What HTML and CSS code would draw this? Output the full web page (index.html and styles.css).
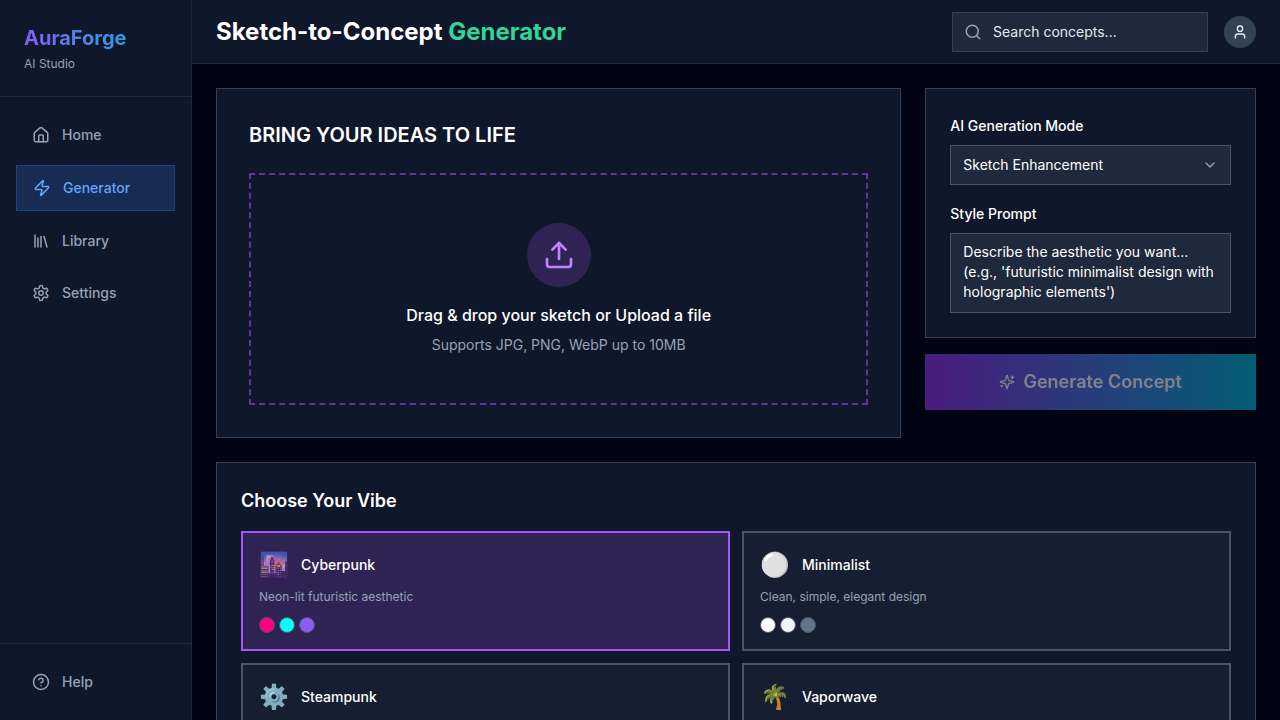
FILE: index.html
```html
<!DOCTYPE html>
<html lang="en">
<head>
    <meta charset="UTF-8">
    <meta name="viewport" content="width=device-width, initial-scale=1.0">
    <title>AuraForge - Sketch-to-Concept Generator</title>
    <link rel="stylesheet" href="styles.css">
</head>
<body>
    <div class="app">
        <aside class="sidebar">
            <div class="brand">
                <div class="brand-name">AuraForge</div>
                <p class="brand-tagline">AI Studio</p>
            </div>

            <nav class="nav">
                <a href="#" class="nav-item">
                    <svg class="icon" width="18" height="18" viewBox="0 0 24 24">
                        <path d="M15 21v-8a1 1 0 0 0-1-1h-4a1 1 0 0 0-1 1v8"/>
                        <path d="M3 10a2 2 0 0 1 .709-1.528l7-5.999a2 2 0 0 1 2.582 0l7 5.999A2 2 0 0 1 21 10v9a2 2 0 0 1-2 2H5a2 2 0 0 1-2-2z"/>
                    </svg>
                    Home
                </a>
                <a href="#" class="nav-item active" aria-current="page">
                    <svg class="icon" width="18" height="18" viewBox="0 0 24 24">
                        <path d="M4 14a1 1 0 0 1-.78-1.63l9.9-10.2a.5.5 0 0 1 .86.46l-1.92 6.02A1 1 0 0 0 13 10h7a1 1 0 0 1 .78 1.63l-9.9 10.2a.5.5 0 0 1-.86-.46l1.92-6.02A1 1 0 0 0 11 14z"/>
                    </svg>
                    Generator
                </a>
                <a href="#" class="nav-item">
                    <svg class="icon" width="18" height="18" viewBox="0 0 24 24">
                        <path d="m16 6 4 14"/>
                        <path d="M12 6v14"/>
                        <path d="M8 8v12"/>
                        <path d="M4 4v16"/>
                    </svg>
                    Library
                </a>
                <a href="#" class="nav-item">
                    <svg class="icon" width="18" height="18" viewBox="0 0 24 24">
                        <path d="M12.22 2h-.44a2 2 0 0 0-2 2v.18a2 2 0 0 1-1 1.73l-.43.25a2 2 0 0 1-2 0l-.15-.08a2 2 0 0 0-2.73.73l-.22.38a2 2 0 0 0 .73 2.73l.15.1a2 2 0 0 1 1 1.72v.51a2 2 0 0 1-1 1.74l-.15.09a2 2 0 0 0-.73 2.73l.22.38a2 2 0 0 0 2.73.73l.15-.08a2 2 0 0 1 2 0l.43.25a2 2 0 0 1 1 1.73V20a2 2 0 0 0 2 2h.44a2 2 0 0 0 2-2v-.18a2 2 0 0 1 1-1.73l.43-.25a2 2 0 0 1 2 0l.15.08a2 2 0 0 0 2.73-.73l.22-.39a2 2 0 0 0-.73-2.73l-.15-.08a2 2 0 0 1-1-1.74v-.5a2 2 0 0 1 1-1.74l.15-.09a2 2 0 0 0 .73-2.73l-.22-.38a2 2 0 0 0-2.73-.73l-.15.08a2 2 0 0 1-2 0l-.43-.25a2 2 0 0 1-1-1.73V4a2 2 0 0 0-2-2z"/>
                        <circle cx="12" cy="12" r="3"/>
                    </svg>
                    Settings
                </a>
            </nav>

            <div class="sidebar-footer">
                <a href="#" class="nav-item">
                    <svg class="icon" width="18" height="18" viewBox="0 0 24 24">
                        <circle cx="12" cy="12" r="10"/>
                        <path d="M9.09 9a3 3 0 0 1 5.83 1c0 2-3 3-3 3"/>
                        <path d="M12 17h.01"/>
                    </svg>
                    Help
                </a>
            </div>
        </aside>

        <div class="content">
            <header class="topbar">
                <h1 class="page-title">Sketch-to-Concept <span class="accent">Generator</span></h1>
                <div class="topbar-actions">
                    <label class="search">
                        <svg class="icon" width="18" height="18" viewBox="0 0 24 24">
                            <circle cx="11" cy="11" r="8"/>
                            <path d="m21 21-4.3-4.3"/>
                        </svg>
                        <input type="search" class="search-input" placeholder="Search concepts..." aria-label="Search concepts">
                    </label>
                    <button type="button" class="avatar" aria-label="Account">
                        <svg class="icon" width="16" height="16" viewBox="0 0 24 24">
                            <path d="M19 21v-2a4 4 0 0 0-4-4H9a4 4 0 0 0-4 4v2"/>
                            <circle cx="12" cy="7" r="4"/>
                        </svg>
                    </button>
                </div>
            </header>

            <main class="main">
                <div class="workspace">
                    <section class="card upload">
                        <h2 class="upload-title">BRING YOUR IDEAS TO LIFE</h2>
                        <button type="button" class="dropzone">
                            <span class="dropzone-icon">
                                <svg class="icon" width="32" height="32" viewBox="0 0 24 24">
                                    <path d="M21 15v4a2 2 0 0 1-2 2H5a2 2 0 0 1-2-2v-4"/>
                                    <path d="m17 8-5-5-5 5"/>
                                    <path d="M12 3v12"/>
                                </svg>
                            </span>
                            <span class="dropzone-text">Drag &amp; drop your sketch or Upload a file</span>
                            <span class="dropzone-hint">Supports JPG, PNG, WebP up to 10MB</span>
                        </button>
                    </section>

                    <form class="controls">
                        <div class="card options">
                            <div class="field">
                                <label for="mode">AI Generation Mode</label>
                                <div class="select-wrap">
                                    <select id="mode" class="input">
                                        <option>Sketch Enhancement</option>
                                    </select>
                                    <svg class="icon chevron" width="16" height="16" viewBox="0 0 24 24">
                                        <path d="m6 9 6 6 6-6"/>
                                    </svg>
                                </div>
                            </div>
                            <div class="field">
                                <label for="prompt">Style Prompt</label>
                                <textarea id="prompt" class="input prompt" placeholder="Describe the aesthetic you want... (e.g., 'futuristic minimalist design with holographic elements')"></textarea>
                            </div>
                        </div>
                        <button type="submit" class="generate-btn" disabled>
                            <svg class="icon" width="16" height="16" viewBox="0 0 24 24">
                                <path d="M9.937 15.5A2 2 0 0 0 8.5 14.063l-6.135-1.582a.5.5 0 0 1 0-.962L8.5 9.936A2 2 0 0 0 9.937 8.5l1.582-6.135a.5.5 0 0 1 .963 0L14.063 8.5A2 2 0 0 0 15.5 9.937l6.135 1.581a.5.5 0 0 1 0 .964L15.5 14.063a2 2 0 0 0-1.437 1.437l-1.582 6.135a.5.5 0 0 1-.963 0z"/>
                                <path d="M20 3v4"/>
                                <path d="M22 5h-4"/>
                                <path d="M4 17v2"/>
                                <path d="M5 18H3"/>
                            </svg>
                            Generate Concept
                        </button>
                    </form>
                </div>

                <section class="card vibes">
                    <h3 class="vibes-title">Choose Your Vibe</h3>
                    <div class="vibe-grid">
                        <button type="button" class="vibe selected" aria-pressed="true">
                            <span class="vibe-head"><span class="vibe-emoji">🌆</span> Cyberpunk</span>
                            <span class="vibe-text">Neon-lit futuristic aesthetic</span>
                            <span class="swatches">
                                <span class="swatch pink"></span>
                                <span class="swatch cyan"></span>
                                <span class="swatch violet"></span>
                            </span>
                        </button>
                        <button type="button" class="vibe" aria-pressed="false">
                            <span class="vibe-head"><span class="vibe-emoji">⚪</span> Minimalist</span>
                            <span class="vibe-text">Clean, simple, elegant design</span>
                            <span class="swatches">
                                <span class="swatch white"></span>
                                <span class="swatch mist"></span>
                                <span class="swatch slate"></span>
                            </span>
                        </button>
                        <button type="button" class="vibe" aria-pressed="false">
                            <span class="vibe-head"><span class="vibe-emoji">⚙️</span> Steampunk</span>
                        </button>
                        <button type="button" class="vibe" aria-pressed="false">
                            <span class="vibe-head"><span class="vibe-emoji">🌴</span> Vaporwave</span>
                        </button>
                    </div>
                </section>
            </main>
        </div>
    </div>
</body>
</html>
```
FILE: styles.css
```css
* {
    margin: 0;
    padding: 0;
    box-sizing: border-box;
}

body {
    font-family: Inter, "Liberation Sans", sans-serif;
    font-size: 14px;
    line-height: 20px;
    color: #ffffff;
    background: #010413;
}

button,
input,
select,
textarea {
    font: inherit;
    color: inherit;
}

a {
    color: inherit;
    text-decoration: none;
}

.icon {
    flex-shrink: 0;
    fill: none;
    stroke: currentColor;
    stroke-width: 2;
    stroke-linecap: round;
    stroke-linejoin: round;
}

.app {
    display: flex;
    height: 100vh;
}

/* Sidebar */
.sidebar {
    display: flex;
    flex-direction: column;
    flex-shrink: 0;
    width: 192px;
    background: #0f172a;
    border-right: 1px solid #1e293b;
}

.brand {
    padding: 24px;
    border-bottom: 1px solid #1e293b;
}

.brand-name {
    font-size: 20px;
    font-weight: 700;
    line-height: 28px;
    color: transparent;
    background: linear-gradient(to right, #8b5cf6, #06b6d4);
    background-clip: text;
    -webkit-background-clip: text;
}

.brand-tagline {
    margin-top: 4px;
    font-size: 12px;
    line-height: 16px;
    color: #94a3b8;
}

.nav {
    display: flex;
    flex: 1;
    flex-direction: column;
    gap: 8px;
    padding: 16px;
}

.nav-item {
    display: flex;
    align-items: center;
    gap: 12px;
    padding: 12px 16px;
    font-weight: 500;
    color: #94a3b8;
}

.nav-item:hover {
    color: #ffffff;
}

.nav-item.active {
    color: #60a5fa;
    background: #172b53;
    border: 1px solid #1e4386;
}

.sidebar-footer {
    padding: 16px;
    border-top: 1px solid #1e293b;
}

/* Top bar */
.content {
    display: flex;
    flex: 1;
    flex-direction: column;
    min-width: 0;
}

.topbar {
    display: flex;
    align-items: center;
    justify-content: space-between;
    flex-shrink: 0;
    height: 64px;
    padding: 0 24px;
    background: #0f172a;
    border-bottom: 1px solid #1e293b;
}

.page-title {
    font-size: 24px;
    font-weight: 700;
    line-height: 32px;
}

.accent {
    color: #34d399;
}

.topbar-actions {
    display: flex;
    align-items: center;
    gap: 16px;
}

.search {
    display: flex;
    align-items: center;
    gap: 11px;
    width: 256px;
    height: 40px;
    padding: 0 11px;
    color: #94a3b8;
    background: #1e293b;
    border: 1px solid #334155;
}

.search-input {
    flex: 1;
    min-width: 0;
    color: #e2e8f0;
    background: none;
    border: none;
    outline: none;
}

.search-input::placeholder {
    color: #e2e8f0;
}

.avatar {
    display: flex;
    align-items: center;
    justify-content: center;
    width: 32px;
    height: 32px;
    color: #e2e8f0;
    background: #334155;
    border: none;
    border-radius: 50%;
    cursor: pointer;
}

/* Main area */
.main {
    display: flex;
    flex: 1;
    flex-direction: column;
    gap: 24px;
    min-height: 0;
    padding: 24px;
    overflow-y: auto;
    scrollbar-width: none;
}

.card {
    background: #0f172a;
    border: 1px solid #334155;
}

.workspace {
    display: grid;
    grid-template-columns: repeat(3, 1fr);
    gap: 24px;
}

.upload {
    grid-column: span 2;
    padding: 32px;
}

.upload-title {
    margin-bottom: 24px;
    font-size: 20px;
    font-weight: 600;
    line-height: 28px;
}

.dropzone {
    display: flex;
    flex-direction: column;
    align-items: center;
    width: 100%;
    padding: 48px;
    background: none;
    border: 2px dashed #5f3597;
    cursor: pointer;
}

.dropzone-icon {
    display: flex;
    align-items: center;
    justify-content: center;
    width: 64px;
    height: 64px;
    margin-bottom: 16px;
    color: #c084fc;
    background: #2f2354;
    border-radius: 50%;
}

.dropzone-text {
    margin-bottom: 8px;
    font-size: 16px;
    font-weight: 500;
    line-height: 24px;
}

.dropzone-hint {
    color: #94a3b8;
}

/* Generation controls */
.controls {
    display: flex;
    flex-direction: column;
    gap: 16px;
}

.options {
    display: flex;
    flex-direction: column;
    gap: 16px;
    padding: 24px;
}

.field {
    display: flex;
    flex-direction: column;
    gap: 6px;
}

.field label {
    font-weight: 500;
    line-height: 26px;
}

.input {
    display: block;
    width: 100%;
    height: 40px;
    padding: 8px 12px;
    color: #ffffff;
    background: #1e293b;
    border: 1px solid #475569;
    border-radius: 0;
    outline: none;
    appearance: none;
}

.input::placeholder {
    color: #ffffff;
}

.select-wrap {
    position: relative;
}

.chevron {
    position: absolute;
    top: 12px;
    right: 13px;
    color: #94a3b8;
    pointer-events: none;
}

.prompt {
    height: 80px;
    resize: none;
}

.generate-btn {
    display: flex;
    align-items: center;
    justify-content: center;
    gap: 8px;
    height: 56px;
    font-size: 18px;
    font-weight: 600;
    line-height: 28px;
    background: linear-gradient(to right, #9333ea, #06b6d4);
    border: none;
    box-shadow: 0 10px 15px rgba(0, 0, 0, 0.3);
    cursor: pointer;
}

.generate-btn:disabled {
    opacity: 0.5;
    cursor: not-allowed;
}

/* Vibe picker */
.vibes {
    padding: 24px;
}

.vibes-title {
    margin-bottom: 16px;
    font-size: 18px;
    font-weight: 600;
    line-height: 28px;
}

.vibe-grid {
    display: grid;
    grid-template-columns: repeat(2, 1fr);
    grid-auto-rows: 1fr;
    gap: 12px;
}

.vibe {
    display: flex;
    flex-direction: column;
    padding: 16px;
    text-align: left;
    background: #161f31;
    border: 2px solid #475569;
    cursor: pointer;
}

.vibe.selected {
    background: #2f2354;
    border-color: #a855f7;
}

.vibe-head {
    display: flex;
    align-items: center;
    gap: 12px;
    margin-bottom: 8px;
    font-weight: 500;
}

.vibe-emoji {
    font-size: 24px;
    line-height: 32px;
}

.vibe-text {
    margin-bottom: 12px;
    font-size: 12px;
    line-height: 16px;
    color: #94a3b8;
}

.swatches {
    display: flex;
    gap: 4px;
}

.swatch {
    width: 16px;
    height: 16px;
    border: 1px solid #475569;
    border-radius: 50%;
}

.pink {
    background: #ff0080;
}

.cyan {
    background: #00ffff;
}

.violet {
    background: #8b5cf6;
}

.white {
    background: #ffffff;
}

.mist {
    background: #f1f5f9;
}

.slate {
    background: #64748b;
}

@media (max-width: 900px) {
    .workspace,
    .vibe-grid {
        grid-template-columns: 1fr;
    }

    .upload {
        grid-column: auto;
    }
}
```
